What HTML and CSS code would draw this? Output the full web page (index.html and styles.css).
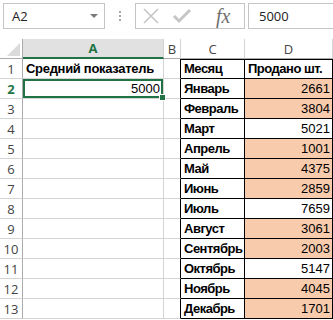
FILE: index.html
```html
<!DOCTYPE html>
<html lang="ru">
<head>
    <meta charset="UTF-8">
    <title>Средний показатель</title>
    <link rel="stylesheet" href="styles.css">
</head>
<body>
    <div class="formula-bar">
        <div class="name-box">
            <span>A2</span>
            <svg class="drop" width="8" height="5" viewBox="0 0 8 5"><path d="M0 0H8L4 4Z" fill="#7a7a7a"/></svg>
        </div>
        <div class="grip"><i></i><i></i><i></i></div>
        <div class="fx-buttons">
            <svg width="18" height="18" viewBox="0 0 18 18"><path d="M2 2L16 16M16 2L2 16" stroke="#c6c6c6" stroke-width="1.6"/></svg>
            <svg width="20" height="18" viewBox="0 0 20 18"><path d="M2 9L7 14L18 3" stroke="#c6c6c6" stroke-width="3" fill="none"/></svg>
            <span class="fx">fx</span>
        </div>
        <div class="formula-input">5000</div>
    </div>

    <table class="sheet">
        <colgroup>
            <col class="c-rows">
            <col class="c-a">
            <col class="c-b">
            <col class="c-c">
            <col class="c-d">
        </colgroup>
        <thead>
            <tr>
                <th class="corner"><span class="tri"></span></th>
                <th class="sel">A</th>
                <th>B</th>
                <th>C</th>
                <th>D</th>
            </tr>
        </thead>
        <tbody>
            <tr>
                <th>1</th>
                <td class="bold">Средний показатель</td>
                <td class="pre-box"></td>
                <td class="box bold">Месяц</td>
                <td class="box bold">Продано шт.</td>
            </tr>
            <tr>
                <th class="sel">2</th>
                <td class="num active">5000</td>
                <td class="pre-box"></td>
                <td class="box bold">Январь</td>
                <td class="box num hl">2661</td>
            </tr>
            <tr>
                <th>3</th><td></td><td class="pre-box"></td>
                <td class="box bold">Февраль</td><td class="box num hl">3804</td>
            </tr>
            <tr>
                <th>4</th><td></td><td class="pre-box"></td>
                <td class="box bold">Март</td><td class="box num">5021</td>
            </tr>
            <tr>
                <th>5</th><td></td><td class="pre-box"></td>
                <td class="box bold">Апрель</td><td class="box num hl">1001</td>
            </tr>
            <tr>
                <th>6</th><td></td><td class="pre-box"></td>
                <td class="box bold">Май</td><td class="box num hl">4375</td>
            </tr>
            <tr>
                <th>7</th><td></td><td class="pre-box"></td>
                <td class="box bold">Июнь</td><td class="box num hl">2859</td>
            </tr>
            <tr>
                <th>8</th><td></td><td class="pre-box"></td>
                <td class="box bold">Июль</td><td class="box num">7659</td>
            </tr>
            <tr>
                <th>9</th><td></td><td class="pre-box"></td>
                <td class="box bold">Август</td><td class="box num hl">3061</td>
            </tr>
            <tr>
                <th>10</th><td></td><td class="pre-box"></td>
                <td class="box bold">Сентябрь</td><td class="box num hl">2003</td>
            </tr>
            <tr>
                <th>11</th><td></td><td class="pre-box"></td>
                <td class="box bold">Октябрь</td><td class="box num">5147</td>
            </tr>
            <tr>
                <th>12</th><td></td><td class="pre-box"></td>
                <td class="box bold">Ноябрь</td><td class="box num hl">4045</td>
            </tr>
            <tr>
                <th>13</th><td></td><td class="pre-box"></td>
                <td class="box bold">Декабрь</td><td class="box num hl">1701</td>
            </tr>
        </tbody>
    </table>
</body>
</html>
```

FILE: styles.css
```css
body {
    margin: 0;
    background: #ffffff;
    overflow: hidden;
    font-family: "Liberation Sans", Arial, sans-serif;
}

/* formula bar */

.formula-bar {
    display: flex;
    align-items: center;
    height: 26px;
    padding: 3px 0 0 3px;
    margin-bottom: 10px;
}

.name-box {
    box-sizing: border-box;
    width: 102px;
    height: 26px;
    border: 1px solid #c6c6c6;
    display: flex;
    align-items: center;
    justify-content: space-between;
    padding: 0 6px 0 8px;
    font-family: "Open Sans", sans-serif;
    font-size: 13px;
    color: #222;
}

.drop {
    margin-top: 1px;
}

.grip {
    width: 30px;
    display: flex;
    flex-direction: column;
    align-items: center;
    gap: 2px;
}

.grip i {
    width: 2px;
    height: 2px;
    background: #a6a6a6;
}

.fx-buttons {
    box-sizing: border-box;
    width: 110px;
    height: 26px;
    border: 1px solid #c6c6c6;
    display: flex;
    align-items: center;
    gap: 12px;
    padding-left: 6px;
}

.fx {
    margin-left: 12px;
    font-family: "Liberation Serif", serif;
    font-style: italic;
    font-size: 20px;
    color: #6f6f6f;
}

.formula-input {
    box-sizing: border-box;
    flex: 1;
    height: 26px;
    margin-left: 3px;
    border: 1px solid #c6c6c6;
    border-right: none;
    display: flex;
    align-items: center;
    padding-left: 10px;
    font-family: "Open Sans", sans-serif;
    font-size: 13px;
    color: #222;
}

/* sheet grid */

.sheet {
    border-collapse: separate;
    border-spacing: 0;
    table-layout: fixed;
    width: 333px;
}

.c-rows { width: 23px; }
.c-a { width: 141px; }
.c-b { width: 17px; }
.c-c { width: 64px; }
.c-d { width: 88px; }

.sheet tr {
    height: 20px;
}

.sheet thead tr {
    height: 19px;
}

.sheet th {
    padding: 0;
    font-family: "Open Sans", sans-serif;
    font-weight: normal;
    font-size: 13px;
    color: #444;
    background: #ffffff;
    border-right: 1px solid #d4d4d4;
    border-bottom: 1px solid #d4d4d4;
}

.sheet thead th {
    border-bottom-color: #ababab;
}

.sheet tbody th {
    border-right-color: #ababab;
    text-align: center;
}

.sheet th.corner {
    position: relative;
    border-right-color: #ababab;
}

.tri {
    position: absolute;
    right: 2px;
    bottom: 2px;
    width: 0;
    height: 0;
    border-left: 13px solid transparent;
    border-bottom: 13px solid #dadada;
}

.sheet thead th.sel {
    background: #e1e1e1;
    color: #217346;
    font-weight: bold;
    border-bottom: 2px solid #217346;
}

.sheet tbody th.sel {
    color: #217346;
    font-weight: bold;
}

.sheet td {
    padding: 0 3px;
    font-size: 13px;
    letter-spacing: -0.3px;
    color: #000;
    white-space: nowrap;
    overflow: hidden;
    border-right: 1px solid #d4d4d4;
    border-bottom: 1px solid #d4d4d4;
}

.sheet td.pre-box {
    border-right-color: #000;
}

.sheet td.box {
    padding: 0 2px 0 3px;
    letter-spacing: -0.5px;
    border-right-color: #000;
    border-bottom-color: #000;
}

.sheet tbody tr:first-child td.box {
    box-shadow: inset 0 1px 0 #000;
}

.bold {
    font-weight: bold;
}

.sheet td.num {
    text-align: right;
    letter-spacing: 0;
}

.hl {
    background: #f8cbad;
}

.sheet td.active {
    position: relative;
    overflow: visible;
    box-shadow: inset 0 0 0 2px #217346;
}

.active::after {
    content: "";
    position: absolute;
    right: -3px;
    bottom: -3px;
    width: 5px;
    height: 5px;
    background: #217346;
    border: 1px solid #fff;
}
```
